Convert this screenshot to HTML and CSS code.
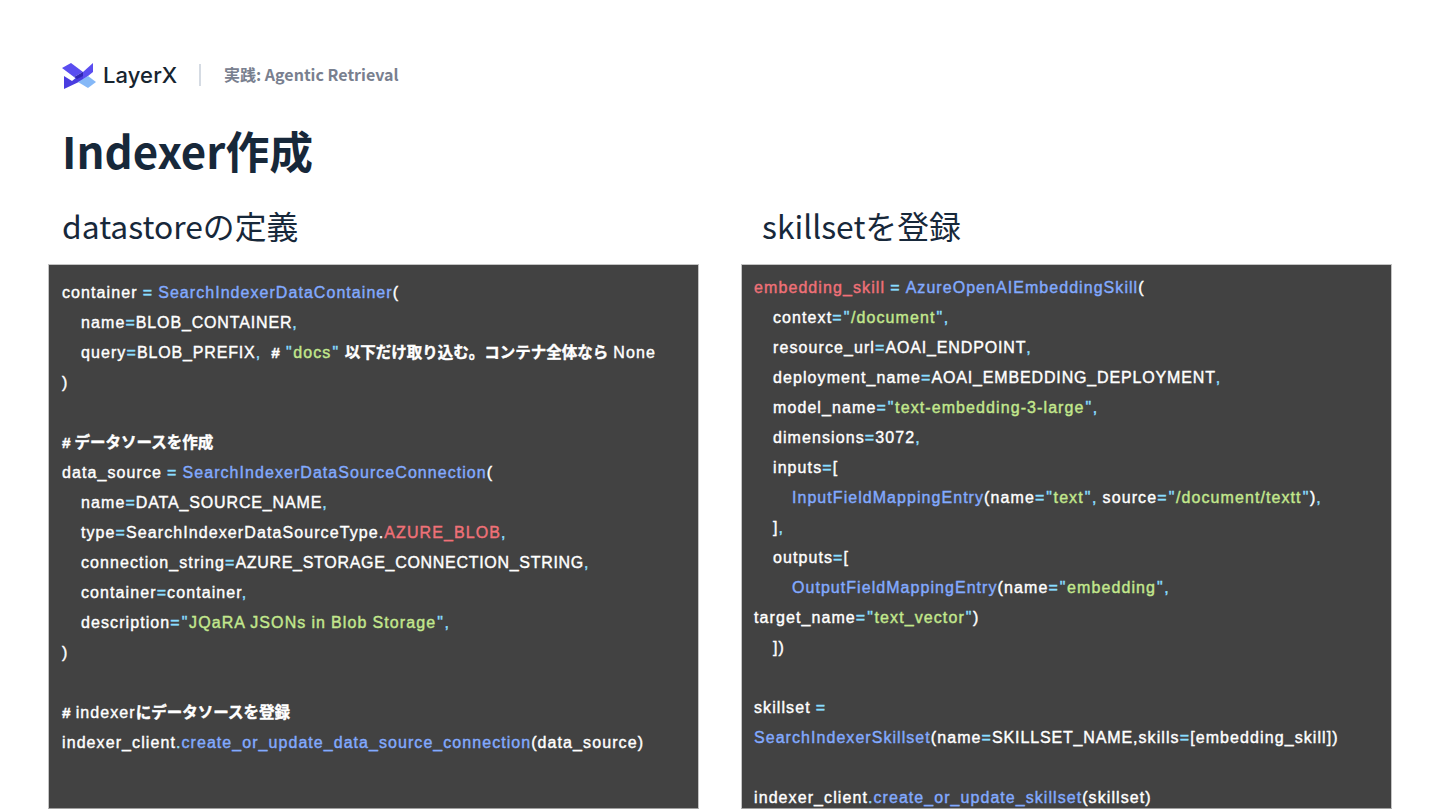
FILE: index.html
```html
<!DOCTYPE html>
<html lang="ja">
<head>
<meta charset="utf-8">
<title>Indexer作成</title>
<link rel="stylesheet" href="styles.css">
</head>
<body>
<div class="slide">
  <header class="top">
    <div class="logo">
      <svg class="mark" width="34" height="28" viewBox="0 0 34 28">
        <path fill="#5a4df0" d="M0 7 9 2 21 11 12 16Z"/>
        <path fill="#5a4df0" d="M21 11 31 2V11L21 19Z"/>
        <path fill="#4a3de0" d="M2 15 10 20 21 11V19L2 28Z"/>
        <path fill="#2f25b5" d="M12 16 21 11V15L15 18Z"/>
        <path fill="#85b8f7" d="M16 21 26 15 34 21 26 27Z"/>
      </svg>
      <span class="word">LayerX</span>
    </div>
    <span class="divider"></span>
    <span class="crumb">実践: Agentic Retrieval</span>
  </header>
  <h1 class="title">Indexer作成</h1>
  <div class="columns">
    <section class="col">
      <h2 class="sub">datastoreの定義</h2>
      <pre class="code code-left"><code>container <b class="o">=</b> <b class="f">SearchIndexerDataContainer</b>(
<i class="in">    </i>name<b class="o">=</b><b class="k">BLOB_CONTAINER</b><b class="o">,</b>
<i class="in">    </i>query<b class="o">=</b><b class="k">BLOB_PREFIX</b><b class="o">,</b>  <b class="c">#</b> <b class="s"><b class="q">"</b>docs<b class="q">"</b></b> <b class="c">以下だけ取り込む。コンテナ全体なら</b> None
)

<b class="c"># データソースを作成</b>
data_source <b class="o">=</b> <b class="f">SearchIndexerDataSourceConnection</b>(
<i class="in">    </i>name<b class="o">=</b><b class="k">DATA_SOURCE_NAME</b><b class="o">,</b>
<i class="in">    </i>type<b class="o">=</b>SearchIndexerDataSourceType.<b class="r">AZURE_BLOB</b><b class="o">,</b>
<i class="in">    </i>connection_string<b class="o">=</b><b class="kk">AZURE_STORAGE_CONNECTION_STRING</b><b class="o">,</b>
<i class="in">    </i>container<b class="o">=</b>container<b class="o">,</b>
<i class="in">    </i>description<b class="o">=</b><b class="s"><b class="q">"</b>JQaRA JSONs in Blob Storage<b class="q">"</b></b><b class="o">,</b>
)

<b class="c">#</b> indexer<b class="c">にデータソースを登録</b>
indexer_client<b class="o">.</b><b class="f">create_or_update_data_source_connection</b>(data_source)</code></pre>
    </section>
    <section class="col">
      <h2 class="sub sub-right">skillsetを登録</h2>
      <pre class="code code-right"><code><b class="r">embedding_skill</b> <b class="o">=</b> <b class="f">AzureOpenAIEmbeddingSkill</b>(
<i class="in">    </i>context<b class="o">=</b><b class="s"><b class="q">"</b>/document<b class="q">"</b></b><b class="o">,</b>
<i class="in">    </i>resource_url<b class="o">=</b><b class="k">AOAI_ENDPOINT</b><b class="o">,</b>
<i class="in">    </i>deployment_name<b class="o">=</b><b class="k">AOAI_EMBEDDING_DEPLOYMENT</b><b class="o">,</b>
<i class="in">    </i>model_name<b class="o">=</b><b class="s"><b class="q">"</b>text-embedding-3-large<b class="q">"</b></b><b class="o">,</b>
<i class="in">    </i>dimensions<b class="o">=</b>3072<b class="o">,</b>
<i class="in">    </i>inputs<b class="o">=</b>[
<i class="in">        </i><b class="f">InputFieldMappingEntry</b>(name<b class="o">=</b><b class="s"><b class="q">"</b>text<b class="q">"</b></b><b class="o">,</b> source<b class="o">=</b><b class="s"><b class="q">"</b>/document/textt<b class="q">"</b></b>)<b class="o">,</b>
<i class="in">    </i>]<b class="o">,</b>
<i class="in">    </i>outputs<b class="o">=</b>[
<i class="in">        </i><b class="f">OutputFieldMappingEntry</b>(name<b class="o">=</b><b class="s"><b class="q">"</b>embedding<b class="q">"</b></b><b class="o">,</b>
target_name<b class="o">=</b><b class="s"><b class="q">"</b>text_vector<b class="q">"</b></b>)
<i class="in">    </i>])

skillset <b class="o">=</b>
<b class="f">SearchIndexerSkillset</b>(name<b class="o">=</b><b class="k">SKILLSET_NAME</b>,skills<b class="o">=</b>[embedding_skill])

indexer_client<b class="o">.</b><b class="f">create_or_update_skillset</b>(skillset)</code></pre>
    </section>
  </div>
</div>
</body>
</html>
```
FILE: styles.css
```css
* { box-sizing: border-box; }
html, body { margin: 0; padding: 0; background: #fff; }
.slide { width: 1440px; height: 810px; overflow: hidden; padding-top: 60px; }
.top { display: flex; align-items: center; height: 30px; padding-left: 62px; }
.logo { display: flex; align-items: center; width: 115px; }
.mark { display: block; flex: none; }
.word { font-family: "Inter", sans-serif; font-size: 22px; font-weight: 500; color: #17242f; margin-left: 7px; line-height: 28px; letter-spacing: 0.1px; }
.divider { width: 2px; height: 22px; background: #d5dbe3; margin-left: 22px; flex: none; }
.crumb { font-family: "Noto Sans CJK JP", sans-serif; font-weight: 700; font-size: 16px; color: #79808f; margin-left: 23px; line-height: 28px; position: relative; top: -1px; }
.title { margin: 30px 0 0; padding-left: 62px; font-family: "Noto Sans CJK JP", sans-serif; font-weight: 700; font-size: 43.8px; line-height: 60px; color: #17283a; }
.columns { display: grid; grid-template-columns: 651px 651px; column-gap: 42px; margin-top: 22px; padding-left: 48px; }
.sub { margin: 0; padding-left: 14px; font-family: "Noto Sans CJK JP", sans-serif; font-weight: 400; font-size: 31.8px; line-height: 46px; height: 46px; color: #17283a; }
.sub-right { padding-left: 21px; }
.code { margin: 16px 0 0; height: 545px; background: #424242; border: 1px solid #c4c4c4; border-bottom-color: #a0a0a0; color: #fff; font-family: "Liberation Sans", "Noto Sans CJK JP", sans-serif; font-size: 16px; line-height: 30px; letter-spacing: 1.09px; word-spacing: -0.5px; white-space: pre; overflow: hidden; -webkit-text-stroke: 0.4px currentColor; }
.code code { font: inherit; display: block; }
.code b { font-weight: inherit; }
.code i { font-style: normal; }
.code-left { padding: 13px 0 0 13px; }
.code-right { padding: 8px 0 0 12px; }
.in { letter-spacing: 0.3px; word-spacing: 0; }
.k { letter-spacing: 0.85px; }
.kk { letter-spacing: 0.7px; }
.o { color: #89ddff; }
.q { color: #89ddff; letter-spacing: 1.6px; padding-left: 1px; }
.f { color: #82aaff; letter-spacing: 1.05px; }
.s { color: #c3e88d; }
.r { color: #f07178; }
.code .c { color: #fff; font-weight: 700; letter-spacing: 0; font-size: 15.5px; }
```
